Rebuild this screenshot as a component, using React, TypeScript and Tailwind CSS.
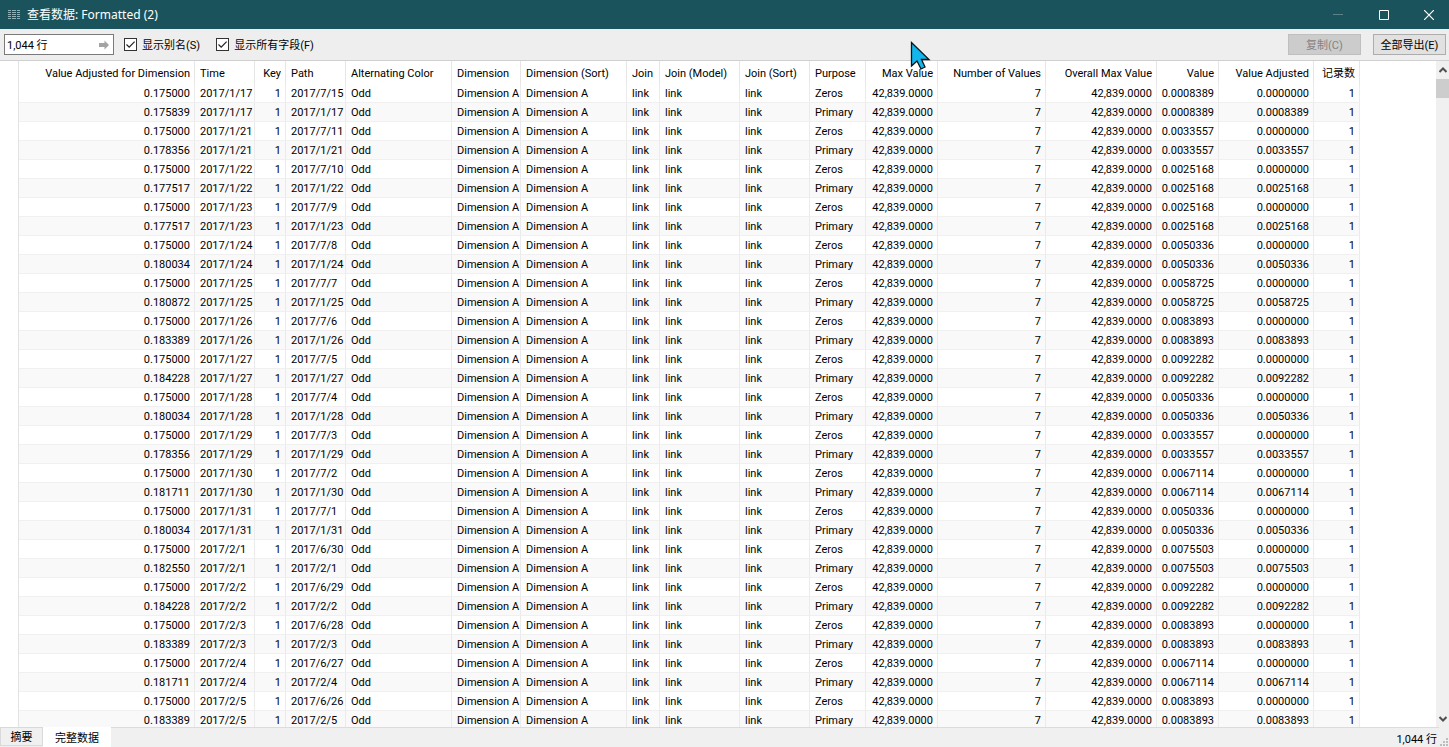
import React, { useState } from 'react';

type Column = { label: string; width: string; right?: boolean };

const COLUMNS: Column[] = [
  { label: 'Value Adjusted for Dimension', width: 'w-[176px]', right: true },
  { label: 'Time', width: 'w-[60px]' },
  { label: 'Key', width: 'w-[31px]', right: true },
  { label: 'Path', width: 'w-[60px]' },
  { label: 'Alternating Color', width: 'w-[106px]' },
  { label: 'Dimension', width: 'w-[69px]' },
  { label: 'Dimension (Sort)', width: 'w-[106px]' },
  { label: 'Join', width: 'w-[33px]' },
  { label: 'Join (Model)', width: 'w-[80px]' },
  { label: 'Join (Sort)', width: 'w-[70px]' },
  { label: 'Purpose', width: 'w-[56px]' },
  { label: 'Max Value', width: 'w-[72px]', right: true },
  { label: 'Number of Values', width: 'w-[108px]', right: true },
  { label: 'Overall Max Value', width: 'w-[111px]', right: true },
  { label: 'Value', width: 'w-[62px]', right: true },
  { label: 'Value Adjusted', width: 'w-[95px]', right: true },
  { label: '记录数', width: 'w-[46px]', right: true },
];

// date, mirrored path for the "Zeros" row, adjusted value, value
const DAYS: [string, string, string, string][] = [
  ['2017/1/17', '2017/7/15', '0.175839', '0.0008389'],
  ['2017/1/21', '2017/7/11', '0.178356', '0.0033557'],
  ['2017/1/22', '2017/7/10', '0.177517', '0.0025168'],
  ['2017/1/23', '2017/7/9', '0.177517', '0.0025168'],
  ['2017/1/24', '2017/7/8', '0.180034', '0.0050336'],
  ['2017/1/25', '2017/7/7', '0.180872', '0.0058725'],
  ['2017/1/26', '2017/7/6', '0.183389', '0.0083893'],
  ['2017/1/27', '2017/7/5', '0.184228', '0.0092282'],
  ['2017/1/28', '2017/7/4', '0.180034', '0.0050336'],
  ['2017/1/29', '2017/7/3', '0.178356', '0.0033557'],
  ['2017/1/30', '2017/7/2', '0.181711', '0.0067114'],
  ['2017/1/31', '2017/7/1', '0.180034', '0.0050336'],
  ['2017/2/1', '2017/6/30', '0.182550', '0.0075503'],
  ['2017/2/2', '2017/6/29', '0.184228', '0.0092282'],
  ['2017/2/3', '2017/6/28', '0.183389', '0.0083893'],
  ['2017/2/4', '2017/6/27', '0.181711', '0.0067114'],
  ['2017/2/5', '2017/6/26', '0.183389', '0.0083893'],
];

const makeRow = (adjusted: string, time: string, path: string, purpose: string, value: string, valueAdjusted: string) => [
  adjusted, time, '1', path, 'Odd', 'Dimension A', 'Dimension A', 'link', 'link', 'link',
  purpose, '42,839.0000', '7', '42,839.0000', value, valueAdjusted, '1',
];

const ROWS = DAYS.flatMap(([time, mirror, adjusted, value]) => [
  makeRow('0.175000', time, mirror, 'Zeros', value, '0.0000000'),
  makeRow(adjusted, time, time, 'Primary', value, value),
]);

const TitleBar = () => (
  <header className="flex h-[29px] shrink-0 items-center bg-[#1a535b] text-white">
    <svg className="ml-2 h-[9px] w-[12px] shrink-0" viewBox="0 0 12 9" fill="#8fb0b4" aria-hidden="true">
      {[0, 2, 4, 6, 8].map((y) => (
        <g key={y}>
          <rect x="0" y={y} width="3" height="1" />
          <rect x="4" y={y} width="4" height="1" />
          <rect x="9" y={y} width="3" height="1" />
        </g>
      ))}
    </svg>
    <h1 className="ml-[7px] flex-1 font-['Noto_Sans','Noto_Sans_CJK_SC',sans-serif] text-[12px] leading-4">查看数据: Formatted (2)</h1>
    <button type="button" aria-label="最小化" disabled className="flex h-full w-[42px] items-center justify-center">
      <svg width="10" height="10" viewBox="0 0 10 10" stroke="#5b8389"><path d="M0 4.5H10" /></svg>
    </button>
    <button type="button" aria-label="最大化" className="flex h-full w-[50px] items-center justify-center">
      <svg width="10" height="10" viewBox="0 0 10 10" fill="none" stroke="white"><path d="M.5 .5H9.5V9.5H.5Z" /></svg>
    </button>
    <button type="button" aria-label="关闭" className="flex h-full w-[40px] items-center justify-center">
      <svg width="10" height="10" viewBox="0 0 10 10" fill="none" stroke="white" strokeWidth="1.2"><path d="M0 0L10 10M10 0L0 10" /></svg>
    </button>
  </header>
);

const Check: React.FC<{ id: string; label: string }> = ({ id, label }) => {
  const [on, setOn] = useState(true);
  return (
    <label htmlFor={id} className="flex items-center gap-[5px]">
      <span className="grid size-[13px]">
        <input
          id={id}
          type="checkbox"
          checked={on}
          onChange={(e) => setOn(e.target.checked)}
          className="col-start-1 row-start-1 size-[13px] appearance-none border border-[#333] bg-white"
        />
        {on && (
          <svg className="pointer-events-none col-start-1 row-start-1" viewBox="0 0 13 13" fill="none" stroke="#222" strokeWidth="1.2">
            <path d="M2.5 6.5L5.2 9.2L10.6 3.6" />
          </svg>
        )}
      </span>
      <span className="pt-[2px]">{label}</span>
    </label>
  );
};

const Toolbar = () => {
  const [count, setCount] = useState('1,044 行');
  return (
    <div className="flex h-8 shrink-0 items-center border-b border-[#d0d0d0] bg-[#eee] pr-[3px] pl-1">
      <div className="mr-[10px] flex h-[21px] w-[110px] items-center border border-[#7a7a7a] bg-white">
        <input
          aria-label="行数"
          value={count}
          onChange={(e) => setCount(e.target.value)}
          className="min-w-0 flex-1 bg-transparent pt-[2px] pl-[2px] outline-none"
        />
        <button type="button" aria-label="转到" className="mr-1">
          <svg width="10" height="10" viewBox="0 0 10 10" fill="#a3a3a3"><path d="M0 3H5.5V.5L10 5L5.5 9.5V7H0Z" /></svg>
        </button>
      </div>
      <div className="flex flex-1 gap-4">
        <Check id="aliases" label="显示别名(S)" />
        <Check id="fields" label="显示所有字段(F)" />
      </div>
      <button type="button" disabled className="mr-3 h-[21px] w-[73px] border border-[#bfbfbf] bg-[#ccc] pt-[2px] text-[#838383]">复制(C)</button>
      <button type="button" className="h-[21px] w-[73px] border border-[#adadad] bg-[#e1e1e1] pt-[2px] whitespace-nowrap">全部导出(E)</button>
    </div>
  );
};

const DataTable = () => (
  <table className="w-[1360px] shrink-0 table-fixed border-separate border-spacing-0 self-start whitespace-nowrap">
    <colgroup>
      <col className="w-[19px]" />
      {COLUMNS.map((c) => <col key={c.label} className={c.width} />)}
    </colgroup>
    <thead>
      <tr className="h-[23px]">
        <td className="border-r border-[#e2e2e2] p-0" />
        {COLUMNS.map((c) => (
          <th key={c.label} scope="col" className={`border-r border-[#e6e6e6] pt-[2px] pr-1 pb-0 pl-[5px] font-normal ${c.right ? 'text-right' : 'text-left'}`}>
            {c.label}
          </th>
        ))}
      </tr>
    </thead>
    <tbody>
      {ROWS.map((row, i) => (
        <tr key={i} className="h-[19px]">
          <td className="border-r border-[#e2e2e2] p-0" />
          {row.map((cell, j) => (
            <td
              key={j}
              className={`border-r border-b border-r-[#ebebeb] border-b-[#f0f0f0] pt-[2px] pb-0 ${i % 2 ? 'bg-[#f9f9f9]' : ''} ${COLUMNS[j].right ? 'pr-1 text-right' : 'pl-[5px]'}`}
            >
              {cell}
            </td>
          ))}
        </tr>
      ))}
    </tbody>
  </table>
);

const ScrollBar = () => (
  <div className="flex w-[13px] shrink-0 flex-col bg-[#f0f0f0]">
    <button type="button" aria-label="向上滚动" className="flex h-[18px] items-center justify-center">
      <svg width="8" height="6" viewBox="0 0 8 6" fill="none" stroke="#505050" strokeWidth="2"><path d="M.5 5L4 1.5L7.5 5" /></svg>
    </button>
    <div className="h-[19px] bg-[#cdcdcd]" />
    <div className="flex-1" />
    <button type="button" aria-label="向下滚动" className="flex h-[17px] items-center justify-center">
      <svg width="8" height="6" viewBox="0 0 8 6" fill="none" stroke="#505050" strokeWidth="2"><path d="M.5 1L4 4.5L7.5 1" /></svg>
    </button>
  </div>
);

const StatusBar = () => (
  <footer className="flex h-5 shrink-0 bg-[#f0f0f0]">
    <button type="button" className="h-[19px] w-[43px] border border-[#d9d9d9] pt-[2px]">摘要</button>
    <button type="button" className="w-[68px] bg-white pt-1">完整数据</button>
    <span className="flex-1 border-t border-[#dcdcdc] pt-1 pr-[2px] text-right">1,044 行</span>
    <svg className="w-[10px] shrink-0 self-end" height="10" viewBox="0 0 10 10" fill="#bdbdbd" aria-hidden="true">
      <path d="M7 1h2v2h-2zM4 4h2v2h-2zM7 4h2v2h-2zM1 7h2v2h-2zM4 7h2v2h-2zM7 7h2v2h-2z" />
    </svg>
  </footer>
);

export default function App() {
  return (
    <div className="relative flex h-screen flex-col overflow-hidden bg-white font-['Roboto','Noto_Sans_CJK_SC',sans-serif] text-[11px] leading-4 text-black">
      <TitleBar />
      <Toolbar />
      <main className="flex min-h-0 flex-1">
        <div className="flex min-w-0 flex-1 overflow-hidden">
          <DataTable />
        </div>
        <ScrollBar />
      </main>
      <StatusBar />
      {/* mouse pointer */}
      <svg className="pointer-events-none absolute top-[41px] left-[910px]" width="22" height="30" viewBox="0 0 22 30" aria-hidden="true">
        <path d="M1.5 1.5V25L7 20L11 28L15 26L11.5 18.5H19Z" fill="#12b5ec" stroke="#111" strokeWidth="1.3" />
      </svg>
    </div>
  );
}
